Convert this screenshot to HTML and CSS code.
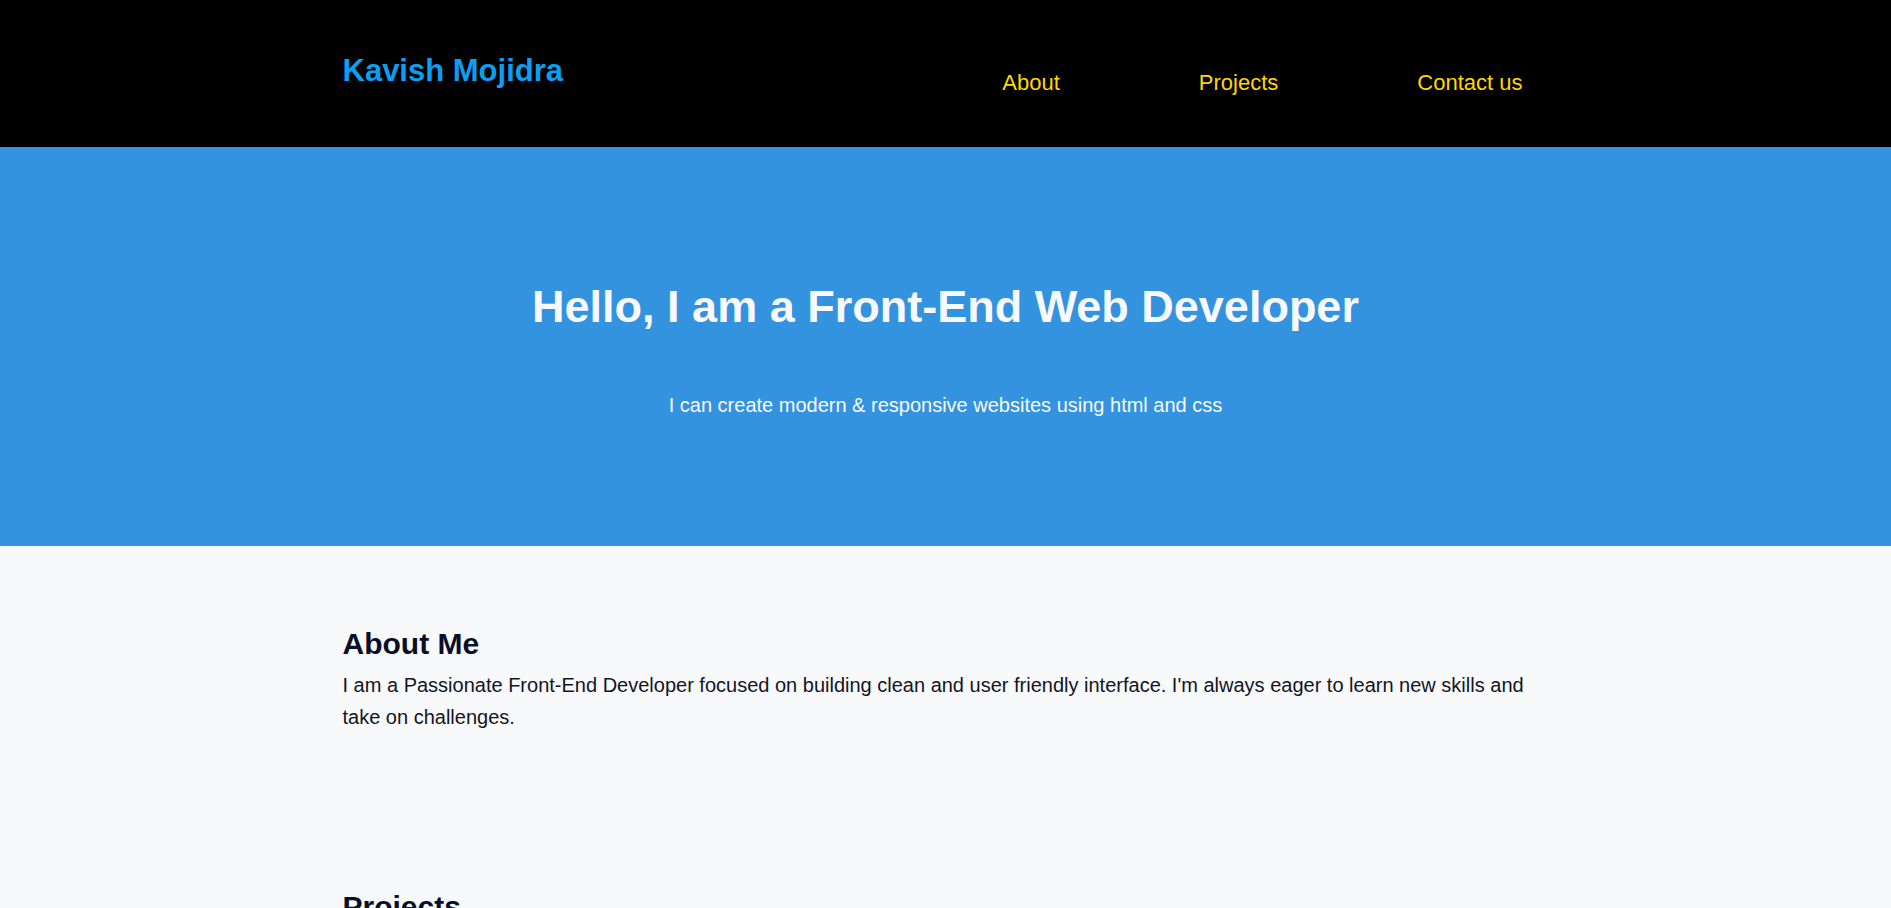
FILE: index.html
```html
<!DOCTYPE html>
<html lang="en">
<head>
<meta charset="UTF-8">
<title>Kavish Mojidra</title>
<link rel="stylesheet" href="styles.css">
</head>
<body>
<header class="site-header">
  <div class="container header-inner">
    <div class="logo">Kavish Mojidra</div>
    <nav class="nav">
      <a href="#about">About</a>
      <a href="#projects">Projects</a>
      <a href="#contact">Contact us</a>
    </nav>
  </div>
</header>
<section class="hero">
  <h1 class="hero-title">Hello, I am a Front-End Web Developer</h1>
  <p class="hero-sub">I can create modern &amp; responsive websites using html and css</p>
</section>
<main class="content">
  <section class="section" id="about">
    <div class="container">
      <h2 class="section-title">About Me</h2>
      <p class="section-text">I am a Passionate Front-End Developer focused on building clean and user friendly interface. I'm always eager to learn new skills and take on challenges.</p>
    </div>
  </section>
  <section class="section section-projects" id="projects">
    <div class="container">
      <h2 class="section-title">Projects</h2>
    </div>
  </section>
</main>
</body>
</html>
```
FILE: styles.css
```css
* {
  box-sizing: border-box;
}

html, body {
  margin: 0;
  padding: 0;
}

body {
  font-family: "Liberation Sans", Arial, sans-serif;
  background: #f8f9fb;
  color: #14151f;
}

.container {
  width: 1206px;
  margin: 0 auto;
}

.site-header {
  background: #000000;
  height: 147px;
}

.header-inner {
  display: flex;
  justify-content: space-between;
  align-items: flex-start;
  padding-top: 53px;
}

.logo {
  font-size: 31px;
  font-weight: 700;
  color: #0a9ff2;
  line-height: normal;
}

.nav {
  display: flex;
  gap: 139px;
  margin-top: 17px;
  margin-right: 26px;
}

.nav a {
  color: #ffd700;
  text-decoration: none;
  font-size: 22px;
  line-height: normal;
}

.hero {
  background: #3393df;
  height: 399px;
  display: flex;
  flex-direction: column;
  align-items: center;
  justify-content: center;
  text-align: center;
  padding-top: 4px;
}

.hero-title {
  margin: 0;
  font-size: 45px;
  font-weight: 700;
  color: #f8f9ff;
  line-height: normal;
}

.hero-sub {
  margin: 61px 0 0;
  font-size: 20px;
  color: #f8f9ff;
  line-height: normal;
}

.section {
  padding: 81px 0 73px;
}

.section-projects {
  padding-top: 84px;
}

.section-title {
  margin: 0 0 8px;
  font-size: 30px;
  font-weight: 700;
  color: #0a0f29;
  line-height: normal;
}

.section-text {
  margin: 0;
  font-size: 20px;
  line-height: 1.6;
  color: #14151f;
}
```
